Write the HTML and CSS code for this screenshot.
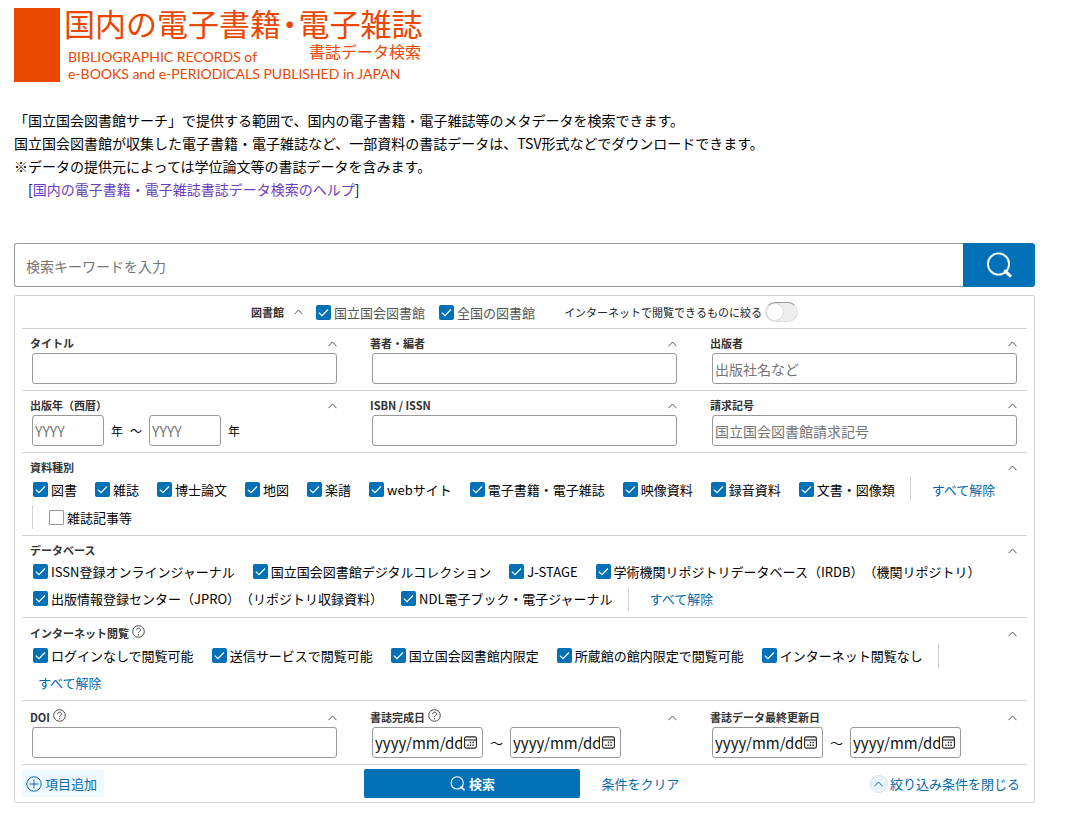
FILE: index.html
```html
<!DOCTYPE html>
<html lang="ja">
<head>
<meta charset="utf-8">
<meta name="viewport" content="width=device-width, initial-scale=1">
<title>国内の電子書籍・電子雑誌 書誌データ検索</title>
<link rel="stylesheet" href="styles.css">
</head>
<body>
<svg class="defs" aria-hidden="true">
  <symbol id="chev" viewBox="0 0 9 6"><path d="M.5 5.2 4.5 1l4 4.2" fill="none" stroke="currentColor"/></symbol>
  <symbol id="lens" viewBox="0 0 26 26"><circle cx="12.5" cy="12" r="10.6" fill="none" stroke="currentColor" stroke-width="1.9"/><path d="m19.2 19.2 5 4.6" fill="none" stroke="currentColor" stroke-width="3" stroke-linecap="round"/></symbol>
  <symbol id="help" viewBox="0 0 13 13"><circle cx="6.5" cy="6.5" r="5.8" fill="none" stroke="currentColor"/><path d="M4.6 5.1c0-2.6 3.9-2.5 3.9-.2 0 1.4-2 1.6-2 3" fill="none" stroke="currentColor"/><circle cx="6.5" cy="9.7" r=".7" fill="currentColor"/></symbol>
  <symbol id="cal" viewBox="0 0 13 13"><rect x=".6" y=".9" width="11.8" height="11.2" rx="1.6" fill="none" stroke="currentColor" stroke-width="1.1"/><path d="M1 4h11" stroke="currentColor" stroke-width="1.1"/><path d="M5.8 6.5h1.4M8.4 6.5h1.4M3.2 9.3h1.4M5.8 9.3h1.4M8.4 9.3h1.4" stroke="currentColor" stroke-width="1.4"/></symbol>
</svg>

<header>
  <h1 class="logo">
    <svg viewBox="0 0 420 80" width="420" height="80" role="img" aria-label="国内の電子書籍・電子雑誌 書誌データ検索">
      <rect width="46" height="74" fill="#ea4700"/>
      <text class="logo-main" x="50" y="28">国内の電子書籍<tspan class="logo-dot" dx="1">・</tspan><tspan dx="1">電子雑誌</tspan></text>
      <text class="logo-sub" x="295" y="50">書誌データ検索</text>
      <text class="logo-en" x="54" y="54">BIBLIOGRAPHIC RECORDS of</text>
      <text class="logo-en" x="54" y="71">e-BOOKS and e-PERIODICALS PUBLISHED in JAPAN</text>
    </svg>
  </h1>
  <p class="intro">「国立国会図書館サーチ」で提供する範囲で、国内の電子書籍・電子雑誌等のメタデータを検索できます。<br>国立国会図書館が収集した電子書籍・電子雑誌など、一部資料の書誌データは、TSV形式などでダウンロードできます。<br>※データの提供元によっては学位論文等の書誌データを含みます。<br>　[<a href="#help-page">国内の電子書籍・電子雑誌書誌データ検索のヘルプ</a>]</p>
</header>

<main>
<form>
  <div class="searchbar">
    <input class="keyword" type="text" placeholder="検索キーワードを入力" aria-label="検索キーワード">
    <button class="go" type="button" aria-label="検索"><svg><use href="#lens"/></svg></button>
  </div>

  <div class="panel">
    <div class="row scope">
      <span class="label">図書館</span>
      <button class="fold" type="button" aria-label="図書館を閉じる"><svg><use href="#chev"/></svg></button>
      <label class="scope-check"><input type="checkbox" checked>国立国会図書館</label>
      <label class="scope-check"><input type="checkbox" checked>全国の図書館</label>
      <label class="online">インターネットで閲覧できるものに絞る<input class="toggle" type="checkbox"></label>
    </div>

    <div class="row fields">
      <div class="field">
        <div class="head"><label class="label" for="title">タイトル</label><button class="fold" type="button" aria-label="閉じる"><svg><use href="#chev"/></svg></button></div>
        <div class="body"><input class="box" id="title" type="text"></div>
      </div>
      <div class="field">
        <div class="head"><label class="label" for="author">著者・編者</label><button class="fold" type="button" aria-label="閉じる"><svg><use href="#chev"/></svg></button></div>
        <div class="body"><input class="box" id="author" type="text"></div>
      </div>
      <div class="field">
        <div class="head"><label class="label" for="publisher">出版者</label><button class="fold" type="button" aria-label="閉じる"><svg><use href="#chev"/></svg></button></div>
        <div class="body"><input class="box" id="publisher" type="text" placeholder="出版社名など"></div>
      </div>
    </div>

    <div class="row fields">
      <div class="field">
        <div class="head"><label class="label" for="year-from">出版年（西暦）</label><button class="fold" type="button" aria-label="閉じる"><svg><use href="#chev"/></svg></button></div>
        <div class="body years"><input class="box year" id="year-from" type="text" placeholder="YYYY"><span>年</span><span>～</span><input class="box year" type="text" placeholder="YYYY" aria-label="出版年（終わり）"><span>年</span></div>
      </div>
      <div class="field">
        <div class="head"><label class="label" for="isbn">ISBN / ISSN</label><button class="fold" type="button" aria-label="閉じる"><svg><use href="#chev"/></svg></button></div>
        <div class="body"><input class="box" id="isbn" type="text"></div>
      </div>
      <div class="field">
        <div class="head"><label class="label" for="callno">請求記号</label><button class="fold" type="button" aria-label="閉じる"><svg><use href="#chev"/></svg></button></div>
        <div class="body"><input class="box" id="callno" type="text" placeholder="国立国会図書館請求記号"></div>
      </div>
    </div>

    <div class="row group material">
      <div class="head"><span class="label">資料種別</span><button class="fold" type="button" aria-label="閉じる"><svg><use href="#chev"/></svg></button></div>
      <div class="checks">
        <label class="check"><input type="checkbox" checked>図書</label>
        <label class="check"><input type="checkbox" checked>雑誌</label>
        <label class="check"><input type="checkbox" checked>博士論文</label>
        <label class="check"><input type="checkbox" checked>地図</label>
        <label class="check"><input type="checkbox" checked>楽譜</label>
        <label class="check"><input type="checkbox" checked>webサイト</label>
        <label class="check"><input type="checkbox" checked>電子書籍・電子雑誌</label>
        <label class="check"><input type="checkbox" checked>映像資料</label>
        <label class="check"><input type="checkbox" checked>録音資料</label>
        <label class="check"><input type="checkbox" checked>文書・図像類</label>
        <span class="sep"></span>
        <button class="link" type="button">すべて解除</button>
        <span class="joined"><span class="sep"></span><label class="check"><input type="checkbox">雑誌記事等</label></span>
      </div>
    </div>

    <div class="row group">
      <div class="head"><span class="label">データベース</span><button class="fold" type="button" aria-label="閉じる"><svg><use href="#chev"/></svg></button></div>
      <div class="checks">
        <label class="check"><input type="checkbox" checked>ISSN登録オンラインジャーナル</label>
        <label class="check"><input type="checkbox" checked>国立国会図書館デジタルコレクション</label>
        <label class="check"><input type="checkbox" checked>J-STAGE</label>
        <label class="check"><input type="checkbox" checked>学術機関リポジトリデータベース（IRDB）（機関リポジトリ）</label>
        <label class="check"><input type="checkbox" checked>出版情報登録センター（JPRO）（リポジトリ収録資料）</label>
        <label class="check"><input type="checkbox" checked>NDL電子ブック・電子ジャーナル</label>
        <span class="sep"></span>
        <button class="link" type="button">すべて解除</button>
      </div>
    </div>

    <div class="row group viewing">
      <div class="head"><span class="label">インターネット閲覧</span><button class="help" type="button" aria-label="ヘルプ"><svg><use href="#help"/></svg></button><button class="fold" type="button" aria-label="閉じる"><svg><use href="#chev"/></svg></button></div>
      <div class="checks">
        <label class="check"><input type="checkbox" checked>ログインなしで閲覧可能</label>
        <label class="check"><input type="checkbox" checked>送信サービスで閲覧可能</label>
        <label class="check"><input type="checkbox" checked>国立国会図書館内限定</label>
        <label class="check"><input type="checkbox" checked>所蔵館の館内限定で閲覧可能</label>
        <label class="check"><input type="checkbox" checked>インターネット閲覧なし</label>
        <span class="sep"></span>
        <button class="link" type="button">すべて解除</button>
      </div>
    </div>

    <div class="row fields dates">
      <div class="field">
        <div class="head"><label class="label" for="doi">DOI</label><button class="help" type="button" aria-label="ヘルプ"><svg><use href="#help"/></svg></button><button class="fold" type="button" aria-label="閉じる"><svg><use href="#chev"/></svg></button></div>
        <div class="body"><input class="box" id="doi" type="text"></div>
      </div>
      <div class="field">
        <div class="head"><label class="label" for="made-from">書誌完成日</label><button class="help" type="button" aria-label="ヘルプ"><svg><use href="#help"/></svg></button><button class="fold" type="button" aria-label="閉じる"><svg><use href="#chev"/></svg></button></div>
        <div class="body range">
          <span class="date"><input id="made-from" type="text" placeholder="yyyy/mm/dd"><svg><use href="#cal"/></svg></span>
          <span>～</span>
          <span class="date"><input type="text" placeholder="yyyy/mm/dd" aria-label="書誌完成日（終わり）"><svg><use href="#cal"/></svg></span>
        </div>
      </div>
      <div class="field">
        <div class="head"><label class="label" for="upd-from">書誌データ最終更新日</label><button class="fold" type="button" aria-label="閉じる"><svg><use href="#chev"/></svg></button></div>
        <div class="body range">
          <span class="date"><input id="upd-from" type="text" placeholder="yyyy/mm/dd"><svg><use href="#cal"/></svg></span>
          <span>～</span>
          <span class="date"><input type="text" placeholder="yyyy/mm/dd" aria-label="最終更新日（終わり）"><svg><use href="#cal"/></svg></span>
        </div>
      </div>
    </div>

    <div class="actions">
      <button class="add" type="button"><svg viewBox="0 0 16 16"><circle cx="8" cy="8" r="7.2" fill="none" stroke="currentColor"/><path d="M8 3.5v9M3.5 8h9" stroke="currentColor"/></svg>項目追加</button>
      <div class="center">
        <button class="submit" type="button"><svg><use href="#lens"/></svg>検索</button>
        <button class="clear" type="button">条件をクリア</button>
      </div>
      <button class="close" type="button"><span class="disc"><svg><use href="#chev"/></svg></span>絞り込み条件を閉じる</button>
    </div>
  </div>
</form>
</main>
</body>
</html>
```

FILE: styles.css
```css
* { box-sizing: border-box; }

body {
  margin: 0;
  padding: 8px 47px 16px 14px;
  background: #fff;
  color: #000;
  font-family: "Noto Sans CJK JP", sans-serif;
  font-size: 13px;
  text-spacing-trim: space-all;
}

button, input {
  margin: 0;
  padding: 0;
  border: 0;
  background: none;
  color: inherit;
  font: inherit;
}
button { cursor: pointer; }
svg { display: block; flex: none; }
.defs { position: absolute; width: 0; height: 0; }

/* Heading */
.logo { margin: 0 0 21px; }
.logo svg { overflow: visible; }
.logo-main, .logo-sub, .logo-en { fill: #ea4700; font-weight: 400; }
.logo-main { font-size: 31px; }
.logo-dot { font-feature-settings: "halt"; }
.logo-sub { font-size: 16px; }
.logo-en { font-family: Lato, "Liberation Sans", sans-serif; font-size: 14px; }

.intro { margin: 0 0 42px; font-size: 14px; line-height: 23px; }
.intro a { color: #6a3cc0; text-decoration: none; }

/* Keyword bar */
.searchbar { display: flex; height: 44px; margin-bottom: 8px; }
.keyword {
  flex: 1;
  min-width: 0;
  padding: 1px 11px 0;
  border: 1px solid #999;
  border-right: 0;
  border-radius: 3px 0 0 3px;
  font-size: 14px;
}
::placeholder { color: #757575; opacity: 1; }
.go {
  display: grid;
  place-items: center;
  width: 72px;
  border-radius: 0 3px 3px 0;
  background: #0071b7;
  color: #fff;
}
.go svg { width: 26px; height: 26px; }

/* Conditions */
.panel {
  padding: 0 7px;
  border: 1px solid #d3d3d3;
  border-radius: 2px;
}
.row { border-bottom: 1px solid #d3d3d3; }
.label { color: #333; font-size: 11px; font-weight: 700; line-height: 15px; }
.fold { display: grid; place-items: center; width: 10px; height: 12px; color: #555; }
.fold svg { width: 9px; height: 6px; }

.scope {
  display: flex;
  align-items: center;
  justify-content: center;
  height: 33px;
}
.scope .fold { margin: 0 13px 0 9px; }
.scope-check { display: flex; align-items: center; gap: 3px; margin-right: 14px; color: #555; }
.online { display: flex; align-items: center; gap: 3px; margin-left: 15px; color: #222; font-size: 11px; }

input[type="checkbox"] { flex: none; appearance: none; }
.scope-check input, .check input {
  width: 15px;
  height: 15px;
  border: 1px solid #999;
  border-radius: 1px;
}
.scope-check input:checked, .check input:checked {
  border: 0;
  border-radius: 2px;
  background: #0071b7 url("data:image/svg+xml,%3Csvg xmlns='http://www.w3.org/2000/svg' viewBox='0 0 15 15'%3E%3Cpath d='M2.8 7.6 6 10.7l6-6.2' fill='none' stroke='white' stroke-width='1.2'/%3E%3C/svg%3E") center / 15px 15px;
}
.toggle {
  width: 33px;
  height: 20px;
  border: 1px solid #ddd;
  border-top-color: #999;
  border-radius: 10px;
  background: #eee;
}
.toggle::before {
  content: "";
  display: block;
  width: 16px;
  height: 16px;
  margin: 1px;
  border-radius: 50%;
  background: #fff;
  box-shadow: 0 0 2px #bbb;
}

.fields {
  display: grid;
  grid-template-columns: repeat(3, minmax(0, 1fr));
  column-gap: 33px;
  padding: 7px 10px 6px 8px;
}
.dates { padding-top: 9px; }
.head { display: flex; align-items: center; height: 15px; }
.head .fold { margin-left: auto; }
.help { margin-left: 3px; padding-bottom: 5px; color: #444; }
.help svg { width: 13px; height: 13px; }
.body { display: flex; align-items: center; margin: 2px 0 0 2px; }
.box, .date {
  height: 31px;
  border: 1px solid #999;
  border-radius: 3px;
}
.box { width: 100%; padding: 1px 2px 0; font-size: 14px; }
.years { gap: 7px; font-size: 12px; }
.box.year { width: 72px; }
.range { gap: 7px; }
.date { display: flex; align-items: center; gap: 2px; width: 111px; padding: 0 5px 0 2px; }
.date input { flex: 1; min-width: 0; font-size: 15px; }
.date input::placeholder { color: #111; }
.date svg { width: 13px; height: 13px; color: #222; }

.group { padding: 7px 10px 5px 8px; }
.checks { display: flex; flex-wrap: wrap; align-items: center; }
.check, .joined, .link { display: flex; align-items: center; height: 27px; white-space: nowrap; }
.check { gap: 3px; margin: 0 15px 0 3px; }
.sep { width: 1px; height: 24px; margin-right: 13px; background: #d3d3d3; }
.link { margin-left: 8px; color: #0069ab; }
.joined { margin-left: 2px; }
.material { padding-bottom: 4px; }
.material .check, .material .joined, .material .link { height: 28px; }
.viewing { padding: 8px 10px 4px 8px; }
.viewing .checks { margin-top: 1px; }

/* Footer actions */
.actions {
  display: grid;
  grid-template-columns: 1fr auto 1fr;
  align-items: center;
  height: 37px;
  color: #0069ab;
}
.actions button { display: flex; align-items: center; }
.actions .add {
  justify-self: start;
  gap: 3px;
  height: 27px;
  padding: 0 7px 0 4px;
  background: #f0f9ff;
}
.add svg { width: 16px; height: 16px; }
.center { display: flex; align-items: center; }
.actions .submit {
  justify-content: center;
  gap: 4px;
  width: 216px;
  height: 29px;
  border-radius: 2px;
  background: #0071b7;
  color: #fff;
  font-weight: 700;
}
.submit svg { width: 15px; height: 15px; }
.actions .clear { padding: 0 5px 0 21px; }
.actions .close { justify-self: end; gap: 2px; padding-right: 7px; }
.disc {
  display: grid;
  place-items: center;
  width: 18px;
  height: 18px;
  border: 1px solid #d5e6f2;
  border-radius: 50%;
  background: #e9f5fc;
}
.disc svg { width: 9px; height: 6px; }
```
